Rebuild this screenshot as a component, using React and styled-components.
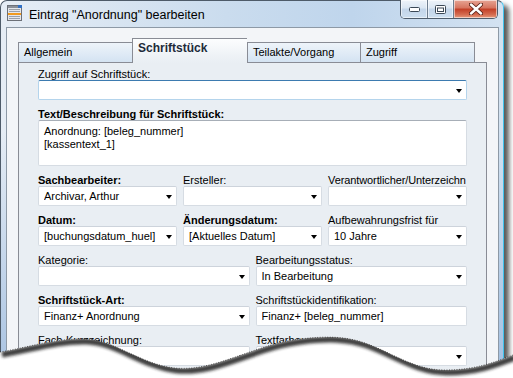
import React from 'react';
import styled, { createGlobalStyle } from 'styled-components';

const GlobalStyle = createGlobalStyle`
  html, body {
    margin: 0;
    padding: 0;
    background: #fff;
    overflow: hidden;
  }
  body {
    font-family: "Liberation Sans", Arial, sans-serif;
    color: #000;
  }
`;

const Stage = styled.div`
  position: relative;
  width: 513px;
  height: 378px;
  overflow: hidden;
  background: #fff;
`;

const Window = styled.div`
  box-sizing: border-box;
  width: 504px;
  height: 430px;
  border: 1px solid #4e5b69;
  border-right-color: #3fc3ee;
  border-bottom: none;
  border-radius: 7px 7px 0 0;
  padding: 0 4px 0 5px;
  display: flex;
  flex-direction: column;
  background:
    linear-gradient(to bottom, rgba(160, 190, 225, 0) 30%, rgba(150, 182, 220, 0.75) 85%),
    linear-gradient(to right, #e6edf5 0%, #cadcee 45%, #bfd5ec 70%, #d3e2f1 100%);
  box-shadow: 6px 4px 5px -1px rgba(0, 0, 0, 0.65);
`;

const TitleBar = styled.div`
  height: 26px;
  display: flex;
  align-items: flex-start;
`;

const TitleIcon = styled.svg`
  margin: 4px 0 0 1px;
  flex: none;
`;

const TitleText = styled.div`
  margin: 6px 0 0 6px;
  font-size: 12.5px;
  line-height: 16px;
  color: #000;
  white-space: nowrap;
`;

const Caption = styled.div`
  margin: -1px 1px 0 auto;
  height: 18px;
  display: flex;
  border: 1px solid #4f5d6c;
  border-top: none;
  border-radius: 0 0 5px 5px;
  overflow: hidden;
`;

const CapButton = styled.div`
  box-sizing: border-box;
  width: ${(p) => p.$w}px;
  height: 100%;
  display: flex;
  align-items: center;
  justify-content: center;
  border-left: ${(p) => (p.$first ? 'none' : '1px solid #6d7d8e')};
  background: ${(p) =>
    p.$close
      ? 'linear-gradient(#e7a595 0%, #d6735e 45%, #c23e26 50%, #d46a4f 80%, #e69a7c 100%)'
      : 'linear-gradient(#eef3f9 0%, #dae6f2 45%, #c3d5e9 50%, #cddff0 100%)'};
  box-shadow: inset 0 0 0 1px rgba(255, 255, 255, 0.55);
`;

const Client = styled.div`
  flex: 1;
  border: 1px solid #8d99a6;
  border-bottom: none;
  background: #f3f5f8;
  padding: 10px 11px 0;
  display: flex;
  flex-direction: column;
`;

const TabStrip = styled.div`
  display: flex;
  align-items: flex-end;
  height: 24px;
  position: relative;
  z-index: 1;
`;

const Tab = styled.div`
  box-sizing: border-box;
  width: ${(p) => p.$w}px;
  height: ${(p) => (p.$active ? 25 : 20)}px;
  margin-bottom: ${(p) => (p.$active ? -1 : 0)}px;
  border: 1px solid #898c95;
  border-bottom: none;
  border-right: ${(p) => (p.$last ? '1px solid #898c95' : 'none')};
  padding: ${(p) => (p.$active ? '2px 0 0 5px' : '0 0 0 5px')};
  font-size: ${(p) => (p.$active ? 12 : 11)}px;
  font-weight: ${(p) => (p.$active ? 700 : 400)};
  line-height: ${(p) => (p.$active ? 14 : 19)}px;
  color: ${(p) => (p.$active ? '#1e2b3a' : '#000')};
  background: ${(p) =>
    p.$active
      ? 'linear-gradient(#fcfdfe, #eef2f6 70%, #e9eef3)'
      : 'linear-gradient(#eef4fa, #d4e3f2)'};
  white-space: nowrap;
`;

const Panel = styled.div`
  flex: 1;
  width: 469px;
  box-sizing: border-box;
  border: 1px solid #898c95;
  border-bottom: none;
  background: #e9eef3;
  padding: 5px 19px 0;
  display: flex;
  flex-direction: column;
  gap: 8px;
`;

const Row = styled.div`
  display: grid;
  grid-template-columns: repeat(${(p) => p.$cols}, minmax(0, 1fr));
  column-gap: 6px;
`;

const Field = styled.div`
  display: flex;
  flex-direction: column;
  min-width: 0;
`;

const Label = styled.div`
  font-size: 11px;
  line-height: 12px;
  font-weight: ${(p) => (p.$bold ? 700 : 400)};
  letter-spacing: ${(p) => (p.$tight ? '-0.1px' : 'normal')};
  white-space: nowrap;
`;

const Box = styled.div`
  box-sizing: border-box;
  height: ${(p) => p.$h || 20}px;
  border: 1px solid ${(p) => (p.$focus ? '#b4d4ec' : '#d6dce3')};
  border-top-color: ${(p) => (p.$focus ? '#3d7bb0' : p.$area ? '#a7aeb7' : '#cdd3db')};
  border-radius: 2px;
  background: #fff;
  display: flex;
  align-items: ${(p) => (p.$area ? 'flex-start' : 'center')};
  padding: ${(p) => (p.$area ? '4px 5px' : '0 4px 0 5px')};
  font-size: 11px;
  line-height: 13px;
  white-space: ${(p) => (p.$area ? 'pre' : 'nowrap')};
  overflow: hidden;
`;

const Value = styled.span`
  flex: 1;
  min-width: 0;
  overflow: hidden;
`;

const Arrow = styled.span`
  flex: none;
  width: 0;
  height: 0;
  border-left: 3.5px solid transparent;
  border-right: 3.5px solid transparent;
  border-top: 4px solid #000;
  margin-top: 1px;
`;

const Torn = styled.svg`
  position: absolute;
  left: 0;
  top: 318px;
`;

const Combo = ({ value, focus }) => (
  <Box $focus={focus}>
    <Value>{value}</Value>
    <Arrow />
  </Box>
);

const curve =
  'M0,352 C30,347 55,338 85,339 C115,340 140,364 175,368 C215,372 255,344 300,339 C325,336 345,336 365,343 C395,354 415,370 445,370 C475,370 495,362 513,355';
const below = `${curve} L513,378 L0,378 Z`;

const App = () => (
  <Stage>
    <GlobalStyle />
    <Window>
      <TitleBar>
        <TitleIcon width="16" height="17" viewBox="0 0 16 17">
          <rect x="0.5" y="0.5" width="14" height="15" fill="#e4e6ea" stroke="#6c7078" />
          <rect x="1" y="1" width="13" height="2" fill="#8a9099" />
          <rect x="2" y="4" width="11" height="1" fill="#9aa0a8" />
          <rect x="2" y="6" width="11" height="1" fill="#9aa0a8" />
          <rect x="1" y="8" width="13" height="2" fill="#f19a1d" />
          <rect x="2" y="11" width="11" height="1" fill="#9aa0a8" />
          <rect x="2" y="13" width="11" height="1" fill="#9aa0a8" />
          <rect x="11" y="0" width="4" height="3" fill="#2f6fc4" />
        </TitleIcon>
        <TitleText>Eintrag "Anordnung" bearbeiten</TitleText>
        <Caption>
          <CapButton $w={26} $first>
            <svg width="11" height="5" viewBox="0 0 11 5">
              <rect x="0.5" y="0.5" width="10" height="4" rx="1" fill="#fff" stroke="#3b4856" />
            </svg>
          </CapButton>
          <CapButton $w={26}>
            <svg width="11" height="9" viewBox="0 0 11 9">
              <rect x="0.5" y="0.5" width="10" height="8" rx="1" fill="#fff" stroke="#3b4856" />
              <rect x="2.5" y="3" width="6" height="3.5" fill="none" stroke="#3b4856" />
            </svg>
          </CapButton>
          <CapButton $w={44} $close>
            <svg width="14" height="12" viewBox="0 0 14 12">
              <path d="M2,1.5 L12,10.5 M12,1.5 L2,10.5" stroke="#5a2218" strokeWidth="4.2" strokeLinecap="round" />
              <path d="M2,1.5 L12,10.5 M12,1.5 L2,10.5" stroke="#fff" strokeWidth="2.4" strokeLinecap="round" />
            </svg>
          </CapButton>
        </Caption>
      </TitleBar>
      <Client>
        <TabStrip>
          <Tab $w={114}>Allgemein</Tab>
          <Tab $w={115} $active>Schriftstück</Tab>
          <Tab $w={113}>Teilakte/Vorgang</Tab>
          <Tab $w={115} $last>Zugriff</Tab>
        </TabStrip>
        <Panel>
          <Field>
            <Label>Zugriff auf Schriftstück:</Label>
            <Combo focus />
          </Field>
          <Field>
            <Label $bold>Text/Beschreibung für Schriftstück:</Label>
            <Box $area $h={46}>{'Anordnung: [beleg_nummer]\n[kassentext_1]'}</Box>
          </Field>
          <Row $cols={3}>
            <Field>
              <Label $bold>Sachbearbeiter:</Label>
              <Combo value="Archivar, Arthur" />
            </Field>
            <Field>
              <Label>Ersteller:</Label>
              <Combo />
            </Field>
            <Field>
              <Label $tight>Verantwortlicher/Unterzeichn</Label>
              <Combo />
            </Field>
          </Row>
          <Row $cols={3}>
            <Field>
              <Label $bold>Datum:</Label>
              <Combo value="[buchungsdatum_huel]" />
            </Field>
            <Field>
              <Label $bold>Änderungsdatum:</Label>
              <Combo value="[Aktuelles Datum]" />
            </Field>
            <Field>
              <Label>Aufbewahrungsfrist für</Label>
              <Combo value="10 Jahre" />
            </Field>
          </Row>
          <Row $cols={2}>
            <Field>
              <Label>Kategorie:</Label>
              <Combo />
            </Field>
            <Field>
              <Label>Bearbeitungsstatus:</Label>
              <Combo value="In Bearbeitung" />
            </Field>
          </Row>
          <Row $cols={2}>
            <Field>
              <Label $bold>Schriftstück-Art:</Label>
              <Combo value="Finanz+ Anordnung" />
            </Field>
            <Field>
              <Label>Schriftstückidentifikation:</Label>
              <Box>
                <Value>Finanz+ [beleg_nummer]</Value>
              </Box>
            </Field>
          </Row>
          <Row $cols={2}>
            <Field>
              <Label>Fach-Kurzzeichnung:</Label>
              <Combo />
            </Field>
            <Field>
              <Label>Textfarbe:</Label>
              <Combo />
            </Field>
          </Row>
        </Panel>
      </Client>
    </Window>
    <Torn width="513" height="60" viewBox="0 318 513 60">
      <defs>
        <clipPath id="below">
          <path d={below} />
        </clipPath>
        <filter id="soft" x="-5%" y="-50%" width="110%" height="200%">
          <feGaussianBlur stdDeviation="1.4" />
        </filter>
      </defs>
      <path d={below} fill="#fff" />
      <g clipPath="url(#below)">
        <path d={curve} transform="translate(2,2.5)" fill="none" stroke="#1f1f1f" strokeWidth="6" filter="url(#soft)" opacity="0.85" />
      </g>
      <path d={curve} fill="none" stroke="#000" strokeWidth="1" strokeDasharray="1 1.5" opacity="0.55" />
    </Torn>
  </Stage>
);

export default App;
